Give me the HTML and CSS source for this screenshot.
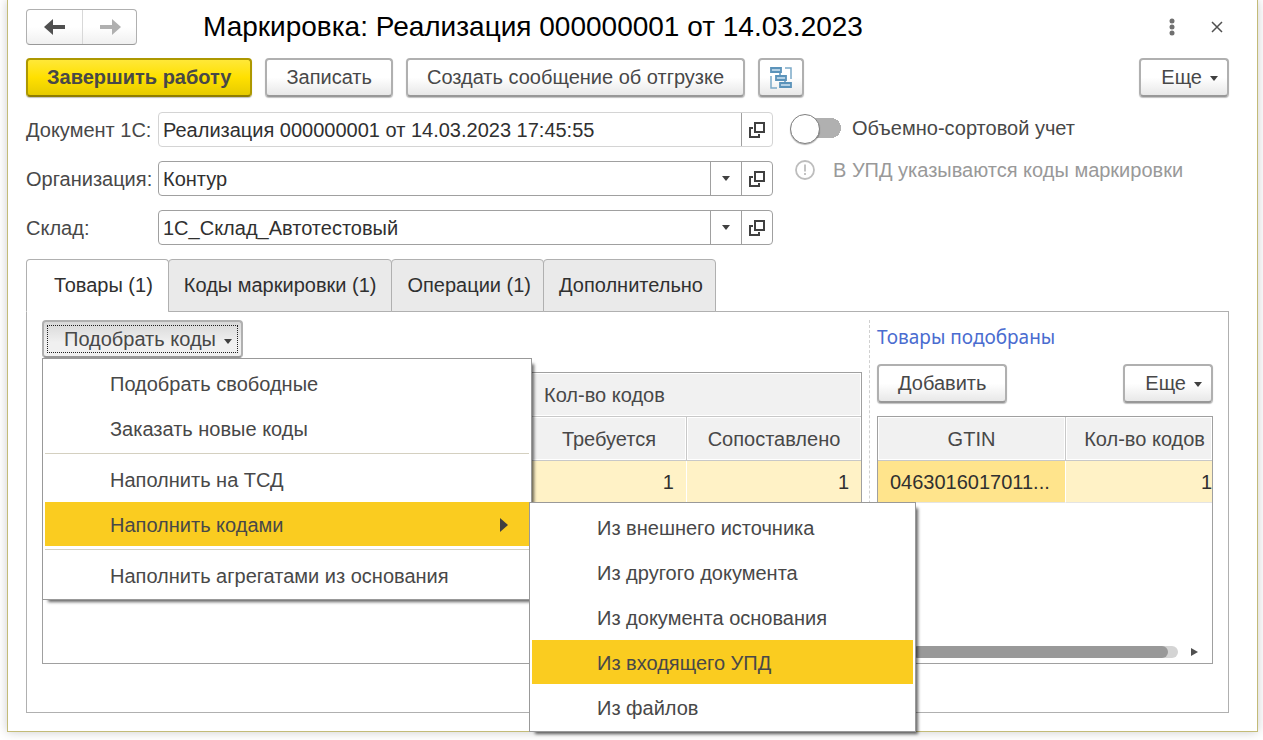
FILE: index.html
```html
<!DOCTYPE html>
<html lang="ru">
<head>
<meta charset="utf-8">
<meta name="viewport" content="width=device-width, initial-scale=1">
<title>Маркировка: Реализация 000000001 от 14.03.2023</title>
<link rel="stylesheet" href="styles.css">
</head>
<body>
<svg class="sprite" aria-hidden="true">
  <symbol id="open" viewBox="0 0 16 16">
    <path d="M6 1h9v9H6z M4 6H1v9h9v-3" fill="none" stroke="#404040" stroke-width="2"/>
  </symbol>
  <symbol id="caret" viewBox="0 0 8 5">
    <path d="M0 0h8L4 5z" fill="#404040"/>
  </symbol>
</svg>

<main class="window">
  <header class="titlebar">
    <div class="history">
      <button type="button" class="history-btn" aria-label="Назад">
        <svg width="22" height="16" viewBox="0 0 22 16"><path d="M0 8 9 0v6h12v4H9v6z" fill="#505050"/></svg>
      </button>
      <button type="button" class="history-btn" aria-label="Вперед">
        <svg width="22" height="16" viewBox="0 0 22 16"><path d="M22 8 13 0v6H1v4h12v6z" fill="#b0b0b0"/></svg>
      </button>
    </div>
    <h1 class="title">Маркировка: Реализация 000000001 от 14.03.2023</h1>
    <button type="button" class="icon-btn" aria-label="Меню">
      <svg width="6" height="18" viewBox="0 0 6 18" fill="#707070"><circle cx="3" cy="3" r="2.500"/><circle cx="3" cy="9" r="2.500"/><circle cx="3" cy="15" r="2.500"/></svg>
    </button>
    <button type="button" class="icon-btn" aria-label="Закрыть">
      <svg width="12" height="12" viewBox="0 0 12 12"><path d="M1 1l10 10M11 1 1 11" stroke="#505050" stroke-width="1.500"/></svg>
    </button>
  </header>

  <div class="toolbar">
    <button type="button" class="btn btn-primary">Завершить работу</button>
    <button type="button" class="btn">Записать</button>
    <button type="button" class="btn">Создать сообщение об отгрузке</button>
    <button type="button" class="btn btn-icon" aria-label="Структура подчиненности">
      <svg width="22" height="22" viewBox="0 0 22 22" fill="none">
        <path d="M15 1h6v11M1 9v12h6" stroke="#7ba9c8" stroke-width="1.500"/>
        <path d="M10 6v3M15 13v3" stroke="#5b93ba" stroke-width="1.500"/>
        <path d="M1 1h10v4H1z M6 9h10v4H6z M10 16h11v4H10z" fill="#b4d0e4" stroke="#5b93ba" stroke-width="1.800"/>
      </svg>
    </button>
    <button type="button" class="btn btn-more push">Еще <svg width="8" height="5"><use href="#caret"/></svg></button>
  </div>

  <section class="form">
    <div class="fields">
      <label class="label" for="doc">Документ 1С:</label>
      <div class="field field-light">
        <input id="doc" class="input" type="text" value="Реализация 000000001 от 14.03.2023 17:45:55" readonly>
        <button type="button" class="field-btn" aria-label="Открыть документ"><svg width="16" height="16"><use href="#open"/></svg></button>
      </div>
      <label class="label" for="org">Организация:</label>
      <div class="field">
        <input id="org" class="input" type="text" value="Контур">
        <button type="button" class="field-btn" aria-label="Выбрать организацию"><svg width="8" height="5"><use href="#caret"/></svg></button>
        <button type="button" class="field-btn" aria-label="Открыть организацию"><svg width="16" height="16"><use href="#open"/></svg></button>
      </div>
      <label class="label" for="stock">Склад:</label>
      <div class="field">
        <input id="stock" class="input" type="text" value="1С_Склад_Автотестовый">
        <button type="button" class="field-btn" aria-label="Выбрать склад"><svg width="8" height="5"><use href="#caret"/></svg></button>
        <button type="button" class="field-btn" aria-label="Открыть склад"><svg width="16" height="16"><use href="#open"/></svg></button>
      </div>
    </div>
    <div class="options">
      <label class="switch-row"><input type="checkbox" role="switch" class="switch">Объемно-сортовой учет</label>
      <p class="hint">
        <svg width="20" height="20" viewBox="0 0 20 20" fill="none" stroke="#bdbdbd"><circle cx="10" cy="10" r="9" stroke-width="1.800"/><path d="M10 4.500v7M10 13v2" stroke-width="1.800"/></svg>
        В УПД указываются коды маркировки
      </p>
    </div>
  </section>

  <div class="tabs" role="tablist">
    <button type="button" class="tab tab-active" role="tab" aria-selected="true">Товары (1)</button>
    <button type="button" class="tab" role="tab" aria-selected="false">Коды маркировки (1)</button>
    <button type="button" class="tab tab-tight" role="tab" aria-selected="false">Операции (1)</button>
    <button type="button" class="tab tab-tight" role="tab" aria-selected="false">Дополнительно</button>
  </div>

  <section class="panel" role="tabpanel">
    <div class="goods">
      <div class="dropdown">
        <button type="button" class="btn btn-more btn-pressed" aria-haspopup="menu" aria-expanded="true">Подобрать коды <svg width="8" height="5"><use href="#caret"/></svg></button>
        <ul class="menu menu-main" role="menu">
          <li class="item"><button type="button" class="item-btn" role="menuitem">Подобрать свободные</button></li>
          <li class="item"><button type="button" class="item-btn" role="menuitem">Заказать новые коды</button></li>
          <li class="divider" role="separator"></li>
          <li class="item"><button type="button" class="item-btn" role="menuitem">Наполнить на ТСД</button></li>
          <li class="item">
            <button type="button" class="item-btn item-on" role="menuitem" aria-haspopup="menu" aria-expanded="true">Наполнить кодами
              <svg width="8" height="14" viewBox="0 0 8 14"><path d="M0 0l8 7-8 7z" fill="#404040"/></svg>
            </button>
            <ul class="menu menu-sub" role="menu">
              <li class="item"><button type="button" class="item-btn" role="menuitem">Из внешнего источника</button></li>
              <li class="item"><button type="button" class="item-btn" role="menuitem">Из другого документа</button></li>
              <li class="item"><button type="button" class="item-btn" role="menuitem">Из документа основания</button></li>
              <li class="item"><button type="button" class="item-btn item-on" role="menuitem">Из входящего УПД</button></li>
              <li class="item"><button type="button" class="item-btn" role="menuitem">Из файлов</button></li>
            </ul>
          </li>
          <li class="divider" role="separator"></li>
          <li class="item"><button type="button" class="item-btn" role="menuitem">Наполнить агрегатами из основания</button></li>
        </ul>
      </div>
      <div class="table-box">
        <table class="table">
          <colgroup><col><col class="col-need"><col class="col-match"></colgroup>
          <thead>
            <tr><th rowspan="2"></th><th colspan="2" class="group">Кол-во кодов</th></tr>
            <tr><th>Требуется</th><th>Сопоставлено</th></tr>
          </thead>
          <tbody>
            <tr><td></td><td class="num">1</td><td class="num">1</td></tr>
          </tbody>
        </table>
      </div>
    </div>

    <div class="picked">
      <a href="#" class="picked-link">Товары подобраны</a>
      <div class="picked-bar">
        <button type="button" class="btn">Добавить</button>
        <button type="button" class="btn btn-more push">Еще <svg width="8" height="5"><use href="#caret"/></svg></button>
      </div>
      <div class="table-box">
        <table class="table">
          <colgroup><col class="col-gtin"><col></colgroup>
          <thead><tr><th>GTIN</th><th class="clip">Кол-во кодов</th></tr></thead>
          <tbody><tr><td class="current">0463016017011...</td><td class="num num-edge">1</td></tr></tbody>
        </table>
        <div class="scroll">
          <div class="track"><div class="thumb"></div></div>
          <svg width="7" height="8" viewBox="0 0 7 8"><path d="M0 0l7 4-7 4z" fill="#505050"/></svg>
        </div>
      </div>
    </div>
  </section>
</main>
</body>
</html>
```

FILE: styles.css
```css
* { box-sizing: border-box; }

body {
  margin: 0;
  padding: 0 5px 8px 7px;
  background: #fff;
  color: #484848;
  font: 20px/24px "Liberation Sans", Arial, sans-serif;
}

button, input { font: inherit; color: inherit; }
button { margin: 0; padding: 0; border: 0; background: none; cursor: pointer; }
svg { display: block; flex: none; }
.sprite { position: absolute; width: 0; height: 0; }

.window {
  padding: 9px 28px 18px 18px;
  border: 1px solid #c3bb78;
  border-top: 0;
  background: #fff;
  box-shadow: 0 0 10px rgba(0, 0, 0, .2);
}

/* Title row */
.titlebar { display: flex; align-items: center; }
.history {
  display: flex;
  height: 36px;
  border: 1px solid #b0b0b0;
  border-bottom-color: #999;
  border-radius: 4px;
  background: linear-gradient(#fff 50%, #f0f0f0);
}
.history-btn { display: grid; place-items: center; width: 55px; }
.history-btn + .history-btn { border-left: 1px solid #d8d8d8; width: 54px; }
.title { flex: 1; margin: 0 0 0 66px; color: #000; font-size: 28px; line-height: 36px; font-weight: 400; }
.icon-btn { display: grid; place-items: center; width: 24px; height: 24px; }
.icon-btn + .icon-btn { margin-left: 21px; }

/* Buttons */
.toolbar { display: flex; gap: 13px; margin-top: 13px; }
.push { margin-left: auto; }
.btn {
  display: flex;
  align-items: center;
  height: 39px;
  padding: 0 19px 2px;
  border: 2px solid #b0b0b0;
  border-bottom-color: #989898;
  border-radius: 4px;
  background: linear-gradient(#fff 50%, #e8e8e8);
  box-shadow: 0 1px 1px rgba(0, 0, 0, .25);
  white-space: nowrap;
}
.btn-primary {
  border-color: #ad9800;
  border-bottom-color: #8f7d00;
  background: linear-gradient(#ffe838, #ffe000 50%, #e6cb00);
  font-weight: 700;
}
.btn-icon { padding: 0 10px; }
.btn-more { padding: 0 9px 2px 20px; gap: 8px; }
.btn-more svg { margin-top: 4px; }
.btn-pressed {
  position: relative;
  height: 38px;
  padding-bottom: 0;
  background: linear-gradient(#d8d8d8, #f0f0f0 60%);
  box-shadow: none;
  outline: 1px dotted #202020;
  outline-offset: -6px;
}

/* Form */
.form { display: grid; grid-template-columns: minmax(0, 747px) 1fr; gap: 17px; margin-top: 15px; }
.fields { display: grid; grid-template-columns: 132px 1fr; row-gap: 14px; align-items: center; }
.field { display: flex; height: 35px; border: 1px solid #a0a0a0; border-radius: 4px; }
.field-light { border-color: #d4d4d4; }
.input { flex: 1; min-width: 0; padding: 0 4px; border: 0; background: none; outline: 0; color: #303030; }
.field-btn { display: grid; place-items: center; width: 31px; border-left: 1px solid #a0a0a0; }
.switch-row { display: flex; align-items: center; gap: 11px; height: 32px; }
.switch {
  appearance: none;
  width: 51px;
  height: 28px;
  margin: 0;
  background: radial-gradient(circle at 41px 14px, #b0b0b0 10px, transparent 10px), linear-gradient(#b0b0b0, #b0b0b0) 14px 4px / 27px 20px no-repeat;
}
.switch::before {
  content: "";
  display: block;
  width: 28px;
  height: 28px;
  border: 1px solid #808080;
  border-radius: 50%;
  background: #fff;
  box-shadow: 0 1px 1px rgba(0, 0, 0, .3);
}
.hint { display: flex; align-items: center; gap: 18px; margin: 14px 0 0 5px; color: #999; }

/* Tabs */
.tabs { display: flex; margin: 14px 0 -1px; }
.tab {
  height: 53px;
  padding: 0 15px 2px;
  border: 1px solid #b0b0b0;
  border-radius: 4px 4px 0 0;
  background: #eaeaea;
  color: #303030;
}
.tab + .tab { margin-left: -1px; }
.tab-tight { padding-right: 12px; }
.tab-active { padding-left: 27px; border-bottom-color: #fff; background: #fff; }

.panel {
  display: grid;
  grid-template-columns: minmax(0, 820px) minmax(0, 1fr);
  gap: 7px;
  padding: 8px 15px 48px;
  border: 1px solid #b0b0b0;
}
.goods, .picked { display: flex; flex-direction: column; }
.picked { padding-left: 7px; border-left: 1px dashed #d0d0d0; }
.picked-link { color: #4a6cd0; font: 19px/34px "Noto Sans", sans-serif; text-decoration: none; }
.picked-bar { display: flex; margin: 10px 0 13px; }

/* Tables */
.table-box { display: flex; flex: 1; flex-direction: column; overflow: hidden; border: 1px solid #a0a0a0; }
.goods .table-box { min-height: 292px; margin-top: 14px; }
.table { width: 100%; table-layout: fixed; border-collapse: separate; border-spacing: 0; }
.table th, .table td { padding: 0 12px; white-space: nowrap; overflow: hidden; }
.table th {
  height: 44px;
  border-right: 1px solid #c8c8c8;
  border-bottom: 1px solid #c8c8c8;
  background: #f1f1f1;
  box-shadow: inset 0 0 0 1px #fff;
  font-weight: 400;
}
.table th:last-child, .table td:last-child { border-right: 0; }
.table .group { text-align: left; }
.table .clip { padding: 0 7px 0 0; text-align: right; }
.table td { height: 42px; border-right: 1px solid #fff; border-bottom: 1px solid #e4e4e4; background: #fff2c6; color: #303030; }
.table .num { text-align: right; }
.table .num-edge { padding-right: 0; }
.table .current { background: #ffe48c; }
.col-need { width: 155px; }
.col-match { width: 174px; }
.col-gtin { width: 188px; }
.scroll { display: flex; align-items: center; gap: 13px; margin-top: auto; padding: 0 14px 5px 34px; }
.track { flex: 1; padding-right: 10px; border-radius: 6px; background: #d4d4d4; }
.thumb { height: 12px; border-radius: 6px; background: #999; }

/* Menus */
.dropdown { position: relative; align-self: flex-start; }
.menu {
  position: absolute;
  margin: 0;
  padding: 2px 2px 1px;
  border: 1px solid #999;
  background: #fff;
  box-shadow: 4px 4px 3px -2px rgba(0, 0, 0, .6);
  list-style: none;
}
.menu-main { z-index: 2; top: 100%; left: 0; width: 490px; }
.menu-sub { top: 0; left: 100%; width: 387px; }
.item { position: relative; padding-bottom: 1px; }
.item-btn { display: flex; align-items: center; justify-content: space-between; width: 100%; height: 44px; padding: 2px 21px 0 65px; text-align: left; }
.item-on { background: #facc20; }
.divider { height: 1px; margin: 2px 0 3px; background: #d4d0c0; }
```
